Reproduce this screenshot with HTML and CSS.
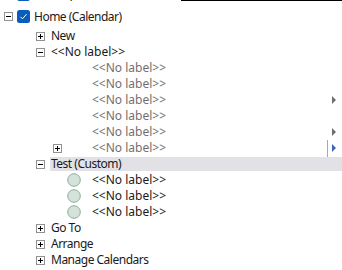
FILE: index.html
```html
<!DOCTYPE html>
<html lang="en">
<head>
  <meta charset="UTF-8">
  <title>Calendar tree</title>
  <link rel="stylesheet" href="styles.css">
</head>
<body>
  <div class="topline"></div>

  <!-- Folder tree -->
  <div class="tree">
    <div class="row tall lvl0">
      <span class="tog"></span>
      <svg class="chk" width="13" height="13" viewBox="0 0 13 13"><rect width="13" height="13" rx="2.5" fill="#0a5cbd"/><path d="M3.5 6.8l2 2 4-4.6" fill="none" stroke="#fff" stroke-width="1"/></svg>
      <span class="label">Home (Hotmail Calendar Shared)</span>
    </div>

    <div class="row taller lvl0">
      <svg class="tog" width="9" height="9" viewBox="0 0 9 9"><rect x="0.5" y="0.5" width="8" height="8" fill="#fff" stroke="#919191"/><path d="M2 4.5h5" stroke="#000"/></svg>
      <svg class="chk" width="13" height="13" viewBox="0 0 13 13"><rect width="13" height="13" rx="2.5" fill="#0a5cbd"/><path d="M3.5 6.8l2 2 4-4.6" fill="none" stroke="#fff" stroke-width="1"/></svg>
      <span class="label">Home (Calendar)</span>
    </div>

    <div class="row lvl1">
      <svg class="tog" width="9" height="9" viewBox="0 0 9 9"><rect x="0.5" y="0.5" width="8" height="8" fill="#fff" stroke="#919191"/><path d="M2 4.5h5M4.5 2v5" stroke="#000"/></svg>
      <span class="label">New</span>
    </div>

    <div class="row lvl1">
      <svg class="tog" width="9" height="9" viewBox="0 0 9 9"><rect x="0.5" y="0.5" width="8" height="8" fill="#fff" stroke="#919191"/><path d="M2 4.5h5" stroke="#000"/></svg>
      <span class="label nolabel">&lt;&lt;No label&gt;&gt;</span>
    </div>

    <div class="row lvl2 muted">
      <span class="tog"></span><span class="icon"></span>
      <span class="label nolabel">&lt;&lt;No label&gt;&gt;</span>
    </div>
    <div class="row lvl2 muted">
      <span class="tog"></span><span class="icon"></span>
      <span class="label nolabel">&lt;&lt;No label&gt;&gt;</span>
    </div>
    <div class="row lvl2 muted">
      <span class="tog"></span><span class="icon"></span>
      <span class="label nolabel">&lt;&lt;No label&gt;&gt;</span>
      <span class="more"><i class="arrow"></i></span>
    </div>
    <div class="row lvl2 muted">
      <span class="tog"></span><span class="icon"></span>
      <span class="label nolabel">&lt;&lt;No label&gt;&gt;</span>
    </div>
    <div class="row lvl2 muted">
      <span class="tog"></span><span class="icon"></span>
      <span class="label nolabel">&lt;&lt;No label&gt;&gt;</span>
      <span class="more"><i class="arrow"></i></span>
    </div>
    <div class="row lvl2 muted">
      <svg class="tog" width="9" height="9" viewBox="0 0 9 9"><rect x="0.5" y="0.5" width="8" height="8" fill="#fff" stroke="#919191"/><path d="M2 4.5h5M4.5 2v5" stroke="#000"/></svg>
      <span class="icon"></span>
      <span class="label nolabel">&lt;&lt;No label&gt;&gt;</span>
      <span class="more split"><i class="arrow blue"></i></span>
    </div>

    <div class="row lvl1">
      <svg class="tog" width="9" height="9" viewBox="0 0 9 9"><rect x="0.5" y="0.5" width="8" height="8" fill="#fff" stroke="#919191"/><path d="M2 4.5h5" stroke="#000"/></svg>
      <span class="label selected">Test (Custom)</span>
    </div>

    <div class="row lvl2">
      <span class="tog"></span>
      <svg class="icon" width="14" height="14" viewBox="0 0 14 14"><circle cx="7" cy="7" r="6.3" fill="#d4e2da" stroke="#8eab9e"/></svg>
      <span class="label nolabel">&lt;&lt;No label&gt;&gt;</span>
    </div>
    <div class="row lvl2">
      <span class="tog"></span>
      <svg class="icon" width="14" height="14" viewBox="0 0 14 14"><circle cx="7" cy="7" r="6.3" fill="#d4e2da" stroke="#8eab9e"/></svg>
      <span class="label nolabel">&lt;&lt;No label&gt;&gt;</span>
    </div>
    <div class="row lvl2">
      <span class="tog"></span>
      <svg class="icon" width="14" height="14" viewBox="0 0 14 14"><circle cx="7" cy="7" r="6.3" fill="#d4e2da" stroke="#8eab9e"/></svg>
      <span class="label nolabel">&lt;&lt;No label&gt;&gt;</span>
    </div>

    <div class="row lvl1">
      <svg class="tog" width="9" height="9" viewBox="0 0 9 9"><rect x="0.5" y="0.5" width="8" height="8" fill="#fff" stroke="#919191"/><path d="M2 4.5h5M4.5 2v5" stroke="#000"/></svg>
      <span class="label">Go To</span>
    </div>
    <div class="row lvl1">
      <svg class="tog" width="9" height="9" viewBox="0 0 9 9"><rect x="0.5" y="0.5" width="8" height="8" fill="#fff" stroke="#919191"/><path d="M2 4.5h5M4.5 2v5" stroke="#000"/></svg>
      <span class="label">Arrange</span>
    </div>
    <div class="row lvl1">
      <svg class="tog" width="9" height="9" viewBox="0 0 9 9"><rect x="0.5" y="0.5" width="8" height="8" fill="#fff" stroke="#919191"/><path d="M2 4.5h5M4.5 2v5" stroke="#000"/></svg>
      <span class="label">Manage Calendars</span>
    </div>
  </div>
</body>
</html>
```

FILE: styles.css
```css
body {
  margin: 0;
  width: 342px;
  height: 270px;
  overflow: hidden;
  background-color: #fff;
  font-family: "Noto Sans", "Liberation Sans", sans-serif;
  font-size: 12px;
  letter-spacing: -0.5px;
  color: #1a1a1a;
  position: relative;
}
.topline {
  position: absolute;
  top: 0;
  left: 181px;
  right: 0;
  height: 1px;
  background-color: #000;
}
.tree {
  margin-top: -16px;
}
.row {
  display: flex;
  align-items: center;
  height: 16px;
  white-space: nowrap;
}
.row.tall {
  height: 21px;
}
.row.taller {
  height: 23px;
}
.tog {
  display: block;
  flex: none;
  width: 9px;
  height: 9px;
}
.chk {
  display: block;
  flex: none;
  margin-left: 4px;
}
.icon {
  display: block;
  flex: none;
  width: 14px;
  height: 14px;
  margin-left: 5px;
}
.label {
  line-height: 16px;
}
.label.nolabel {
  letter-spacing: 0;
}
.lvl0 {
  padding-left: 4px;
}
.lvl0 .label {
  margin-left: 4px;
}
.lvl1 {
  padding-left: 36px;
}
.lvl1 .label {
  margin-left: 6px;
}
.lvl2 {
  padding-left: 53px;
}
.lvl2 .label {
  margin-left: 11px;
}
.muted .label {
  color: #707070;
}
.label.selected {
  flex: 1;
  margin-left: 5px;
  padding-left: 1px;
  line-height: 14px;
  background-color: #e2e1e6;
}
.more {
  margin-left: auto;
  margin-right: 6px;
  height: 17px;
  padding-left: 4px;
  border-left: 1px solid transparent;
  display: flex;
  align-items: center;
}
.more.split {
  border-left-color: #a8a8a8;
}
.arrow {
  display: block;
  width: 0;
  height: 0;
  border-left: 4px solid #707070;
  border-top: 4px solid transparent;
  border-bottom: 4px solid transparent;
}
.arrow.blue {
  border-left-color: #3f63c4;
}
```
